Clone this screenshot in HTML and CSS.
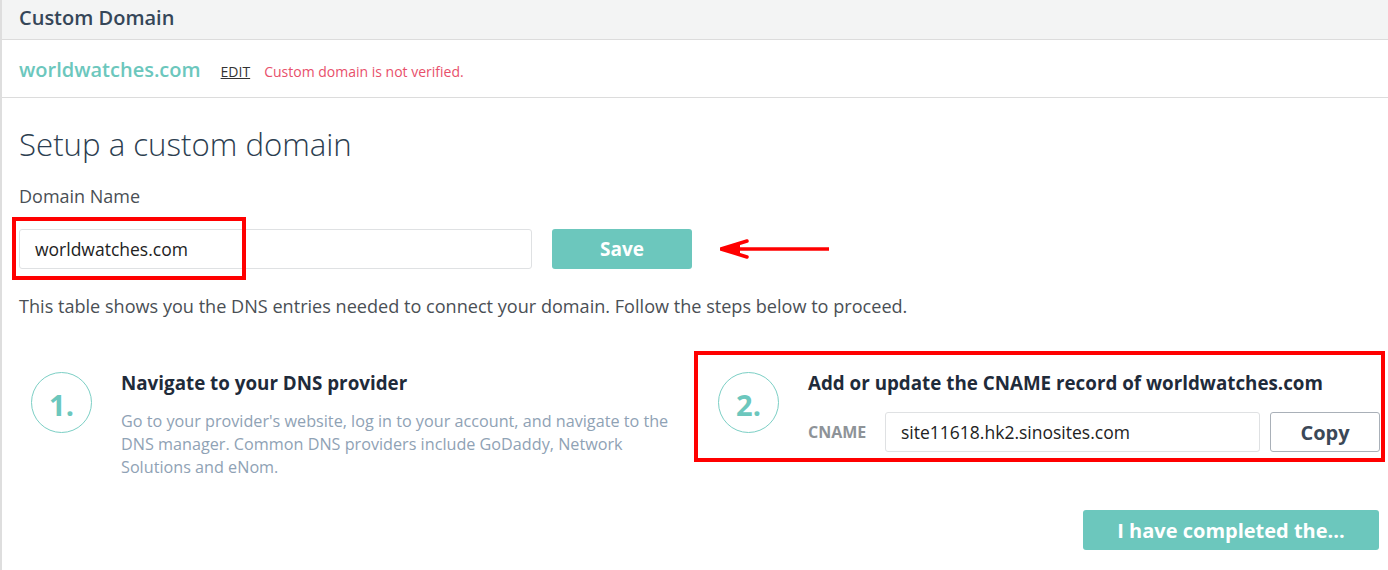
FILE: index.html
```html
<!DOCTYPE html>
<html lang="en">
<head>
<meta charset="utf-8">
<title>Custom Domain</title>
<link rel="stylesheet" href="styles.css">
</head>
<body>
<div class="panel">
  <div class="panel-head">Custom Domain</div>
  <div class="domain-row">
    <span class="domain">worldwatches.com</span>
    <a class="edit" href="#">EDIT</a>
    <span class="status">Custom domain is not verified.</span>
  </div>
  <div class="content">
    <h1 class="title">Setup a custom domain</h1>
    <div class="label">Domain Name</div>
    <div class="input-row">
      <div class="input">worldwatches.com</div>
      <button class="btn btn-save">Save</button>
      <svg class="arrow" width="110" height="20" viewBox="0 0 110 20">
        <path d="M109 10 H6" stroke="#ff0000" stroke-width="3.5" fill="none"/>
        <path d="M1 10 L27 2 M1 10 L27 18" stroke="#ff0000" stroke-width="3.5" fill="none" stroke-linecap="round"/>
        <path d="M1 10 L20 5 L20 15 Z" fill="#ff0000"/>
      </svg>
      <div class="mark mark-input"></div>
    </div>
    <p class="intro">This table shows you the DNS entries needed to connect your domain. Follow the steps below to proceed.</p>
    <div class="steps">
      <div class="step step-one">
        <div class="num">1.</div>
        <div class="step-body">
          <h2 class="step-title">Navigate to your DNS provider</h2>
          <p class="step-text">Go to your provider's website, log in to your account, and navigate to the DNS manager. Common DNS providers include GoDaddy, Network Solutions and eNom.</p>
        </div>
      </div>
      <div class="step step-two">
        <div class="num">2.</div>
        <div class="step-body">
          <h2 class="step-title">Add or update the CNAME record of worldwatches.com</h2>
          <div class="cname-row">
            <span class="cname-label">CNAME</span>
            <div class="input cname-input">site11618.hk2.sinosites.com</div>
            <button class="btn btn-copy">Copy</button>
          </div>
        </div>
      </div>
    </div>
    <div class="actions">
      <button class="btn btn-done">I have completed the...</button>
    </div>
  </div>
</div>
</body>
</html>
```

FILE: styles.css
```css
* { box-sizing: border-box; }
html, body { margin: 0; padding: 0; background: #fff; }
body {
  font-family: "Open Sans", "Liberation Sans", sans-serif;
  color: #34495e;
  width: 1388px;
  height: 570px;
  overflow: hidden;
}
.panel {
  border-left: 2px solid #dedede;
  height: 570px;
}
.panel-head {
  height: 40px;
  background: #f3f4f4;
  border-bottom: 1px solid #dcdcdc;
  padding-left: 17px;
  font-size: 20px;
  font-weight: 600;
  line-height: 36px;
  color: #354658;
}
.domain-row {
  height: 58px;
  border-bottom: 1px solid #dcdcdc;
  display: flex;
  align-items: center;
  padding-left: 17px;
  padding-top: 2px;
}
.domain {
  font-size: 20px;
  font-weight: 600;
  color: #6cc7bd;
}
.edit {
  margin-left: 20px;
  font-size: 14px;
  color: #333;
  text-decoration: underline;
  margin-top: 3px;
}
.status {
  margin-left: 14px;
  font-size: 14px;
  color: #e8506b;
  margin-top: 3px;
}
.content {
  padding: 0 3px 0 17px;
}
.title {
  margin: 24px 0 0;
  font-size: 31.2px;
  font-weight: 300;
  line-height: 44px;
  color: #2c3e50;
}
.label {
  margin-top: 18px;
  font-size: 18px;
  font-weight: 400;
  line-height: 24px;
  color: #4a4f55;
}
.input-row {
  position: relative;
  display: flex;
  align-items: center;
  margin-top: 21px;
}
.input {
  height: 40px;
  border: 1px solid #dfe1e3;
  border-radius: 3px;
  background: #fff;
  font-size: 17.5px;
  line-height: 38px;
  padding-left: 15px;
  color: #222;
}
.input-row .input { width: 513px; }
.btn {
  font-family: "Open Sans", "Liberation Sans", sans-serif;
  border-radius: 3px;
  cursor: pointer;
}
.btn-save {
  margin-left: 20px;
  width: 140px;
  height: 40px;
  background: #6cc7bd;
  border: none;
  color: #fff;
  font-size: 19px;
  font-weight: 700;
}
.arrow {
  margin-left: 28px;
  display: block;
}
.mark {
  position: absolute;
  border: 4px solid #ff0000;
}
.mark-input {
  left: -7px;
  top: -12px;
  width: 234px;
  height: 63px;
}
.intro {
  margin: 23px 0 0;
  font-size: 18.1px;
  font-weight: 400;
  line-height: 28px;
  color: #4a4f55;
}
.steps {
  display: grid;
  grid-template-columns: 675px 691px;
  margin-top: 31px;
}
.step {
  display: flex;
  align-items: flex-start;
}
.step-one {
  padding: 21px 0 0 12px;
}
.step-two {
  border: 4px solid #ff0000;
  padding: 17px 0 8px 20px;
  height: 111px;
}
.num {
  flex: none;
  width: 61px;
  height: 61px;
  border: 1px solid #7ccfc5;
  border-radius: 50%;
  color: #6cc7bd;
  font-size: 29px;
  font-weight: 700;
  display: flex;
  align-items: center;
  justify-content: center;
  padding-top: 3px;
}
.step-body {
  margin-left: 29px;
}
.step-title {
  margin: 0;
  font-size: 18.8px;
  font-weight: 700;
  line-height: 22px;
  color: #1f2b3a;
}
.step-text {
  margin: 16px 0 0;
  font-size: 16.2px;
  line-height: 23px;
  color: #8fa2b5;
  width: 560px;
}
.cname-row {
  display: flex;
  align-items: center;
  margin-top: 18px;
}
.cname-label {
  width: 77px;
  font-size: 16px;
  font-weight: 700;
  color: #8e9398;
}
.cname-input {
  width: 375px;
  height: 40px;
  font-size: 17.5px;
}
.btn-copy {
  margin-left: 10px;
  width: 110px;
  height: 40px;
  background: #fff;
  border: 1px solid #a9b0b8;
  color: #3b4857;
  font-size: 20px;
  font-weight: 700;
  padding: 0;
}
.actions {
  display: flex;
  justify-content: flex-end;
  margin-top: 31px;
  padding-right: 6px;
}
.btn-done {
  width: 296px;
  height: 40px;
  background: #6cc7bd;
  border: none;
  color: #fff;
  font-size: 20px;
  font-weight: 700;
  padding: 0;
}
```
